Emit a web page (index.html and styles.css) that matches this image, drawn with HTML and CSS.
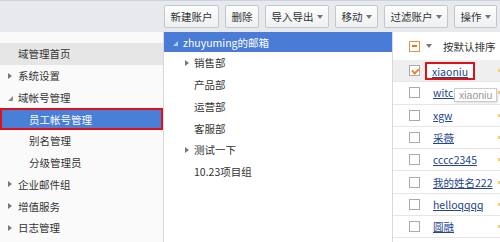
FILE: index.html
```html
<!DOCTYPE html>
<html lang="zh-CN">
<head>
    <meta charset="UTF-8">
    <title>员工帐号管理</title>
    <link rel="stylesheet" href="styles.css">
</head>
<body>
    <div class="toolbar">
        <button class="btn">新建账户</button>
        <button class="btn">删除</button>
        <button class="btn">导入导出 <span class="caret"></span></button>
        <button class="btn">移动 <span class="caret"></span></button>
        <button class="btn">过滤账户 <span class="caret"></span></button>
        <button class="btn">操作 <span class="caret"></span></button>
    </div>

    <div class="main">
        <ul class="side">
            <li class="side-item home">域管理首页</li>
            <li class="side-item"><span class="tri closed"></span>系统设置</li>
            <li class="side-item"><span class="tri open"></span>域帐号管理</li>
            <li class="side-item sub active">员工帐号管理</li>
            <li class="side-item sub">别名管理</li>
            <li class="side-item sub">分级管理员</li>
            <li class="side-item"><span class="tri closed"></span>企业邮件组</li>
            <li class="side-item"><span class="tri closed"></span>增值服务</li>
            <li class="side-item"><span class="tri closed"></span>日志管理</li>
        </ul>

        <div class="tree">
            <div class="tree-head"><span class="tri open light"></span>zhuyuming的邮箱</div>
            <div class="tree-item"><span class="tri closed"></span>销售部</div>
            <div class="tree-item">产品部</div>
            <div class="tree-item">运营部</div>
            <div class="tree-item">客服部</div>
            <div class="tree-item"><span class="tri closed"></span>测试一下</div>
            <div class="tree-item">10.23项目组</div>
        </div>

        <div class="list">
            <div class="list-head">
                <span class="box part"></span>
                <span class="caret"></span>
                <span class="sort">按默认排序</span>
            </div>
            <div class="row selected"><span class="box checked"></span><a class="name boxed">xiaoniu</a><span class="star"></span></div>
            <div class="row"><span class="box"></span><a class="name">witch</a><span class="star"></span></div>
            <div class="row"><span class="box"></span><a class="name">xgw</a><span class="star"></span></div>
            <div class="row"><span class="box"></span><a class="name">采薇</a><span class="star"></span></div>
            <div class="row"><span class="box"></span><a class="name">cccc2345</a><span class="star"></span></div>
            <div class="row"><span class="box"></span><a class="name">我的姓名222</a><span class="star"></span></div>
            <div class="row"><span class="box"></span><a class="name">helloqqqq</a><span class="star"></span></div>
            <div class="row"><span class="box"></span><a class="name">圆融</a><span class="star"></span></div>
            <div class="tip">xiaoniu</div>
        </div>
    </div>
</body>
</html>
```

FILE: styles.css
```css
* {
    margin: 0;
    padding: 0;
    box-sizing: border-box;
}

body {
    width: 500px;
    height: 242px;
    overflow: hidden;
    background: #fff;
    color: #333;
    font-family: "Noto Sans CJK SC", "Noto Sans", sans-serif;
    font-size: 10.5px;
}

.toolbar {
    height: 32px;
    display: flex;
    align-items: center;
    justify-content: flex-end;
    gap: 6px;
    padding-right: 3px;
    background: #e8e9ec;
    border-top: 1px solid #c8d3df;
}

.btn {
    height: 23px;
    padding: 0 5.5px;
    font: inherit;
    color: #333;
    background: linear-gradient(#fdfdfd, #eef0f2);
    border: 1px solid #c3c6ca;
    border-radius: 2px;
    display: flex;
    align-items: center;
    gap: 3px;
    white-space: nowrap;
}

.caret {
    display: inline-block;
    width: 0;
    height: 0;
    border-left: 3.5px solid transparent;
    border-right: 3.5px solid transparent;
    border-top: 4px solid #777;
}

.main {
    display: flex;
    height: 210px;
}

.side {
    list-style: none;
    width: 164px;
    flex: none;
    padding-top: 11px;
    background: #fafafa;
    border-right: 1px solid #d9d9d9;
}

.side-item {
    height: 21.75px;
    display: flex;
    align-items: center;
    padding-left: 8px;
    white-space: nowrap;
}

.side-item.home {
    background: #e6e6e6;
    padding-left: 18px;
}

.side-item.sub {
    padding-left: 29px;
}

.side-item.active {
    background: #4a7fd8;
    color: #fff;
    border: 2px solid #e0101b;
    padding-left: 27px;
}

.tri {
    display: inline-block;
    width: 0;
    height: 0;
    margin-right: 6px;
}

.tri.closed {
    border-top: 3.5px solid transparent;
    border-bottom: 3.5px solid transparent;
    border-left: 4px solid #777;
}

.tri.open {
    border-left: 5px solid transparent;
    border-bottom: 5px solid #888;
    margin-right: 5px;
    margin-top: 2px;
}

.tri.light {
    border-bottom-color: #b9ccef;
}

.tree {
    width: 229px;
    flex: none;
    border-right: 1px solid #d9d9d9;
}

.tree-head {
    height: 20px;
    display: flex;
    align-items: center;
    padding-left: 9px;
    background: #4a7bd6;
    color: #fff;
    white-space: nowrap;
}

.tree-item {
    height: 21.75px;
    display: flex;
    align-items: center;
    padding-left: 30px;
    white-space: nowrap;
}

.tree-item .tri {
    margin-left: -9px;
    margin-right: 5px;
}

.list {
    flex: 1;
    min-width: 0;
    position: relative;
    overflow: hidden;
}

.list-head {
    height: 28px;
    display: flex;
    align-items: center;
    padding-left: 16px;
    white-space: nowrap;
}

.list-head .caret {
    margin-left: 6px;
}

.sort {
    margin-left: 11px;
}

.box {
    width: 11px;
    height: 11px;
    border: 1px solid #aaa;
    background: #fff;
    position: relative;
    flex: none;
}

.box.part {
    border-color: #e09a3a;
}

.box.part::after {
    content: "";
    position: absolute;
    left: 2px;
    top: 3.5px;
    width: 5px;
    height: 2px;
    background: #e5782a;
}

.box.checked::after {
    content: "";
    position: absolute;
    left: 3px;
    top: 1px;
    width: 3px;
    height: 5px;
    border: solid #e5892a;
    border-width: 0 2px 2px 0;
    transform: rotate(45deg);
}

.row {
    height: 22.3px;
    display: flex;
    align-items: center;
    padding-left: 16px;
    border-bottom: 1px solid #e6e6e6;
    white-space: nowrap;
}

.row.selected {
    background: #efefef;
}

.name {
    margin-left: 12px;
    color: #23468c;
    text-decoration: underline;
    padding: 0 1px;
}

.name.boxed {
    margin-left: 5px;
    padding: 0 5px;
    height: 18px;
    line-height: 15px;
    border: 2px solid #e0101b;
    background: #fff;
}

.star {
    margin-left: auto;
    flex: none;
    width: 2px;
    height: 3px;
    background: #ecd27a;
}

.tip {
    position: absolute;
    left: 61px;
    top: 56px;
    padding: 0 4px;
    background: #fff;
    color: #999;
    border: 1px solid #ccc;
    box-shadow: 1px 1px 2px rgba(0, 0, 0, 0.15);
    font-family: "Liberation Sans", sans-serif;
    font-size: 10.5px;
    white-space: nowrap;
}
```
